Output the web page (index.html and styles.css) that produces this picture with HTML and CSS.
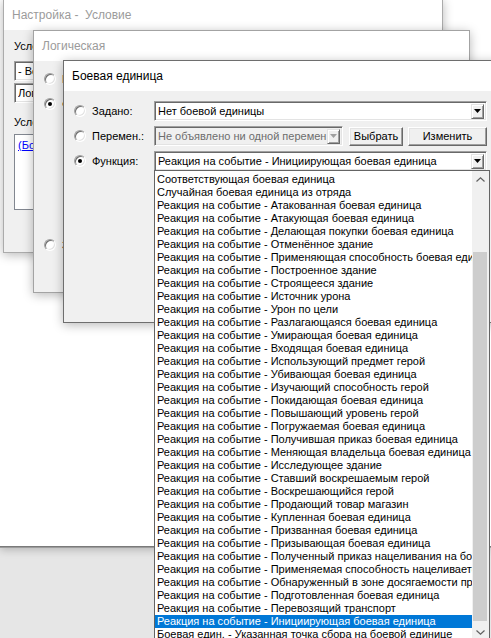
FILE: index.html
```html
<!DOCTYPE html>
<html lang="ru">
<head>
<meta charset="utf-8">
<title>Боевая единица</title>
<link rel="stylesheet" href="styles.css">
</head>
<body>
<div class="desktop">
  <div class="backdrop"></div>

  <div class="win win1">
    <div class="titlebar inactive">Настройка -  Условие</div>
    <div class="body body1">
      <div class="lbl">Условие:</div>
      <div class="combo small"><span class="val">- Вообще -</span></div>
      <div class="combo small gap2"><span class="val">Логическое сравнение</span></div>
      <div class="lbl lbl2">Условие:</div>
      <div class="textbox"><a class="link">(Боевая единица) равно (Боевая единица)</a></div>
    </div>
  </div>

  <div class="win win2">
    <div class="titlebar inactive">Логическая</div>
    <div class="body body2">
      <div class="r2row"><span class="radio"></span><span class="rlbl">Боевая единица</span></div>
      <div class="r2row"><span class="radio on"></span><span class="rlbl">Функция</span></div>
      <div class="r2row last"><span class="radio"></span><span class="rlbl">Значение</span></div>
    </div>
  </div>

  <div class="win win3">
    <div class="titlebar">Боевая единица</div>
    <div class="body body3">
      <div class="row">
        <span class="radio"></span>
        <span class="rlabel">Задано:</span>
        <div class="combo wide"><span class="val">Нет боевой единицы</span><span class="arrow"><svg width="7" height="4" viewBox="0 0 7 4"><polygon points="0,0 7,0 3.5,4" fill="#000"/></svg></span></div>
      </div>
      <div class="row">
        <span class="radio"></span>
        <span class="rlabel">Перемен.:</span>
        <div class="ctrls">
          <div class="combo disabled"><span class="val">Не объявлено ни одной перемен</span><span class="arrow"><svg width="7" height="4" viewBox="0 0 7 4"><polygon points="0,0 7,0 3.5,4" fill="#a0a0a0"/></svg></span></div>
          <div class="btn b1">Выбрать</div>
          <div class="btn b2">Изменить</div>
        </div>
      </div>
      <div class="row">
        <span class="radio on"></span>
        <span class="rlabel">Функция:</span>
        <div class="combo wide"><span class="val">Реакция на событие - Инициирующая боевая единица</span><span class="arrow"><svg width="7" height="4" viewBox="0 0 7 4"><polygon points="0,0 7,0 3.5,4" fill="#000"/></svg></span></div>
      </div>
    </div>
  </div>

  <div class="dropdown">
    <div class="items">
      <div class="item">Соответствующая боевая единица</div>
      <div class="item">Случайная боевая единица из отряда</div>
      <div class="item">Реакция на событие - Атакованная боевая единица</div>
      <div class="item">Реакция на событие - Атакующая боевая единица</div>
      <div class="item">Реакция на событие - Делающая покупки боевая единица</div>
      <div class="item">Реакция на событие - Отменённое здание</div>
      <div class="item">Реакция на событие - Применяющая способность боевая единица</div>
      <div class="item">Реакция на событие - Построенное здание</div>
      <div class="item">Реакция на событие - Строящееся здание</div>
      <div class="item">Реакция на событие - Источник урона</div>
      <div class="item">Реакция на событие - Урон по цели</div>
      <div class="item">Реакция на событие - Разлагающаяся боевая единица</div>
      <div class="item">Реакция на событие - Умирающая боевая единица</div>
      <div class="item">Реакция на событие - Входящая боевая единица</div>
      <div class="item">Реакция на событие - Использующий предмет герой</div>
      <div class="item">Реакция на событие - Убивающая боевая единица</div>
      <div class="item">Реакция на событие - Изучающий способность герой</div>
      <div class="item">Реакция на событие - Покидающая боевая единица</div>
      <div class="item">Реакция на событие - Повышающий уровень герой</div>
      <div class="item">Реакция на событие - Погружаемая боевая единица</div>
      <div class="item">Реакция на событие - Получившая приказ боевая единица</div>
      <div class="item">Реакция на событие - Меняющая владельца боевая единица</div>
      <div class="item">Реакция на событие - Исследующее здание</div>
      <div class="item">Реакция на событие - Ставший воскрешаемым герой</div>
      <div class="item">Реакция на событие - Воскрешающийся герой</div>
      <div class="item">Реакция на событие - Продающий товар магазин</div>
      <div class="item">Реакция на событие - Купленная боевая единица</div>
      <div class="item">Реакция на событие - Призванная боевая единица</div>
      <div class="item">Реакция на событие - Призывающая боевая единица</div>
      <div class="item">Реакция на событие - Полученный приказ нацеливания на боевую единицу</div>
      <div class="item">Реакция на событие - Применяемая способность нацеливается на боевую единицу</div>
      <div class="item">Реакция на событие - Обнаруженный в зоне досягаемости противник</div>
      <div class="item">Реакция на событие - Подготовленная боевая единица</div>
      <div class="item">Реакция на событие - Перевозящий транспорт</div>
      <div class="item selected">Реакция на событие - Инициирующая боевая единица</div>
      <div class="item">Боевая един. - Указанная точка сбора на боевой единице</div>
    </div>
    <div class="scrollbar">
      <div class="sbtn"><svg width="9" height="5" viewBox="0 0 9 5"><polyline points="0.5,4.5 4.5,0.8 8.5,4.5" fill="none" stroke="#606060" stroke-width="1.2"/></svg></div>
      <div class="track"><div class="thumb"></div></div>
      <div class="sbtn"><svg width="9" height="5" viewBox="0 0 9 5"><polyline points="0.5,0.5 4.5,4.2 8.5,0.5" fill="none" stroke="#606060" stroke-width="1.2"/></svg></div>
    </div>
  </div>
</div>
</body>
</html>
```

FILE: styles.css
```css
* { box-sizing: border-box; }
html, body { margin: 0; padding: 0; }
body {
  width: 491px;
  height: 638px;
  overflow: hidden;
  font-family: "Liberation Sans", Arial, sans-serif;
  font-size: 11px;
  color: #000;
}
.desktop {
  position: relative;
  width: 491px;
  height: 638px;
  overflow: hidden;
  background: #e6e6e6;
}
.backdrop {
  position: absolute;
  left: 0;
  top: 0;
  width: 491px;
  height: 546px;
  background: #fff;
  box-shadow: 0 1px 0 #7a7a7a, 0 2px 0 #9c9c9c, 0 4px 8px rgba(0,0,0,0.22);
}
.win {
  position: absolute;
  background: #f0f0f0;
  display: flex;
  flex-direction: column;
  overflow: hidden;
  box-shadow: 0 2px 10px rgba(0,0,0,0.28);
}
.win1 { left: 3px; top: -1px; width: 440px; height: 254px; border: 1px solid #ababab; }
.win2 { left: 33px; top: 30px; width: 437px; height: 263px; border: 1px solid #a3a3a3; }
.win3 { left: 63px; top: 60px; width: 460px; height: 263px; border: 1px solid #6e6e6e; }

.titlebar {
  height: 30px;
  flex: none;
  background: #fff;
  padding-left: 8px;
  font-size: 12px;
  line-height: 30px;
  white-space: pre;
  color: #000;
}
.titlebar.inactive { color: #9b9b9b; }

.body { flex: 1; display: flex; flex-direction: column; }

/* window 1 */
.body1 { padding: 10px 10px 0 10px; }
.lbl { height: 13px; line-height: 13px; }
.body1 .lbl { margin-bottom: 8px; }
.body1 .lbl2 { margin-top: 13px; margin-bottom: 5px; }
.combo.small { width: 300px; }
.gap2 { margin-top: 2px; }
.textbox {
  width: 300px;
  height: 76px;
  background: #fff;
  border: 1px solid #828790;
  padding: 4px 3px;
}
.link { color: #0000ff; text-decoration: underline; white-space: nowrap; }

/* window 2 */
.body2 { padding: 12px 0 0 10px; }
.r2row { display: flex; align-items: center; height: 12px; gap: 6px; margin-bottom: 13px; }
.r2row.last { margin-top: 116px; }
.rlbl { white-space: nowrap; }

/* window 3 */
.body3 { padding: 10px 0 0 10px; gap: 5px; }
.row {
  display: grid;
  grid-template-columns: 12px 56px 333px;
  column-gap: 6px;
  align-items: center;
  height: 20px;
}
.rlabel { white-space: nowrap; line-height: 13px; }
.ctrls { display: flex; }
.ctrls .combo { width: 189px; }
.b1 { width: 54px; margin-left: 6px; }
.b2 { width: 79px; margin-left: 5px; }

.radio {
  position: relative;
  width: 12px;
  height: 12px;
  border-radius: 50%;
  background: #fff;
  border: 1px solid;
  border-color: #a0a0a0 #ffffff #ffffff #a0a0a0;
  box-shadow: inset 1px 1px 0 #6e6e6e, inset -1px -1px 0 #e3e3e3;
}
.radio.on::after {
  content: "";
  position: absolute;
  left: 3px;
  top: 3px;
  width: 4px;
  height: 4px;
  border-radius: 50%;
  background: #000;
}

.combo {
  height: 20px;
  display: flex;
  align-items: center;
  background: #fff;
  border: 1px solid;
  border-color: #a0a0a0 #ffffff #ffffff #a0a0a0;
  box-shadow: inset 1px 1px 0 #696969, inset -1px -1px 0 #e3e3e3;
  padding: 0 2px 0 3px;
}
.combo.disabled { background: #f0f0f0; color: #6d6d6d; }
.combo .val { flex: 1; white-space: nowrap; overflow: hidden; }
.arrow {
  flex: none;
  width: 13px;
  height: 15px;
  display: flex;
  align-items: center;
  justify-content: center;
  background: #f0f0f0;
  border: 1px solid;
  border-color: #e3e3e3 #696969 #696969 #e3e3e3;
  box-shadow: inset 1px 1px 0 #fff, inset -1px -1px 0 #a0a0a0;
}
.btn {
  height: 19px;
  align-self: center;
  display: flex;
  align-items: center;
  justify-content: center;
  background: #f0f0f0;
  border: 1px solid;
  border-color: #ffffff #696969 #696969 #ffffff;
  box-shadow: inset -1px -1px 0 #a0a0a0, inset 1px 1px 0 #e3e3e3;
  white-space: nowrap;
}

/* dropdown list */
.dropdown {
  position: absolute;
  left: 154px;
  top: 170px;
  width: 336px;
  height: 472px;
  background: #fff;
  border: 1px solid #646464;
  display: flex;
}
.items { flex: 1; overflow: hidden; padding-top: 2px; }
.item {
  height: 13px;
  line-height: 13px;
  padding-left: 2px;
  white-space: nowrap;
  overflow: hidden;
}
.item.selected { background: #0078d7; color: #fff; }
.scrollbar {
  width: 17px;
  flex: none;
  background: #f0f0f0;
  display: flex;
  flex-direction: column;
}
.sbtn { height: 17px; flex: none; display: flex; align-items: center; justify-content: center; }
.track { flex: 1; padding-top: 64px; }
.thumb { height: 369px; margin: 0 2px 0 1px; background: #cdcdcd; }
```
